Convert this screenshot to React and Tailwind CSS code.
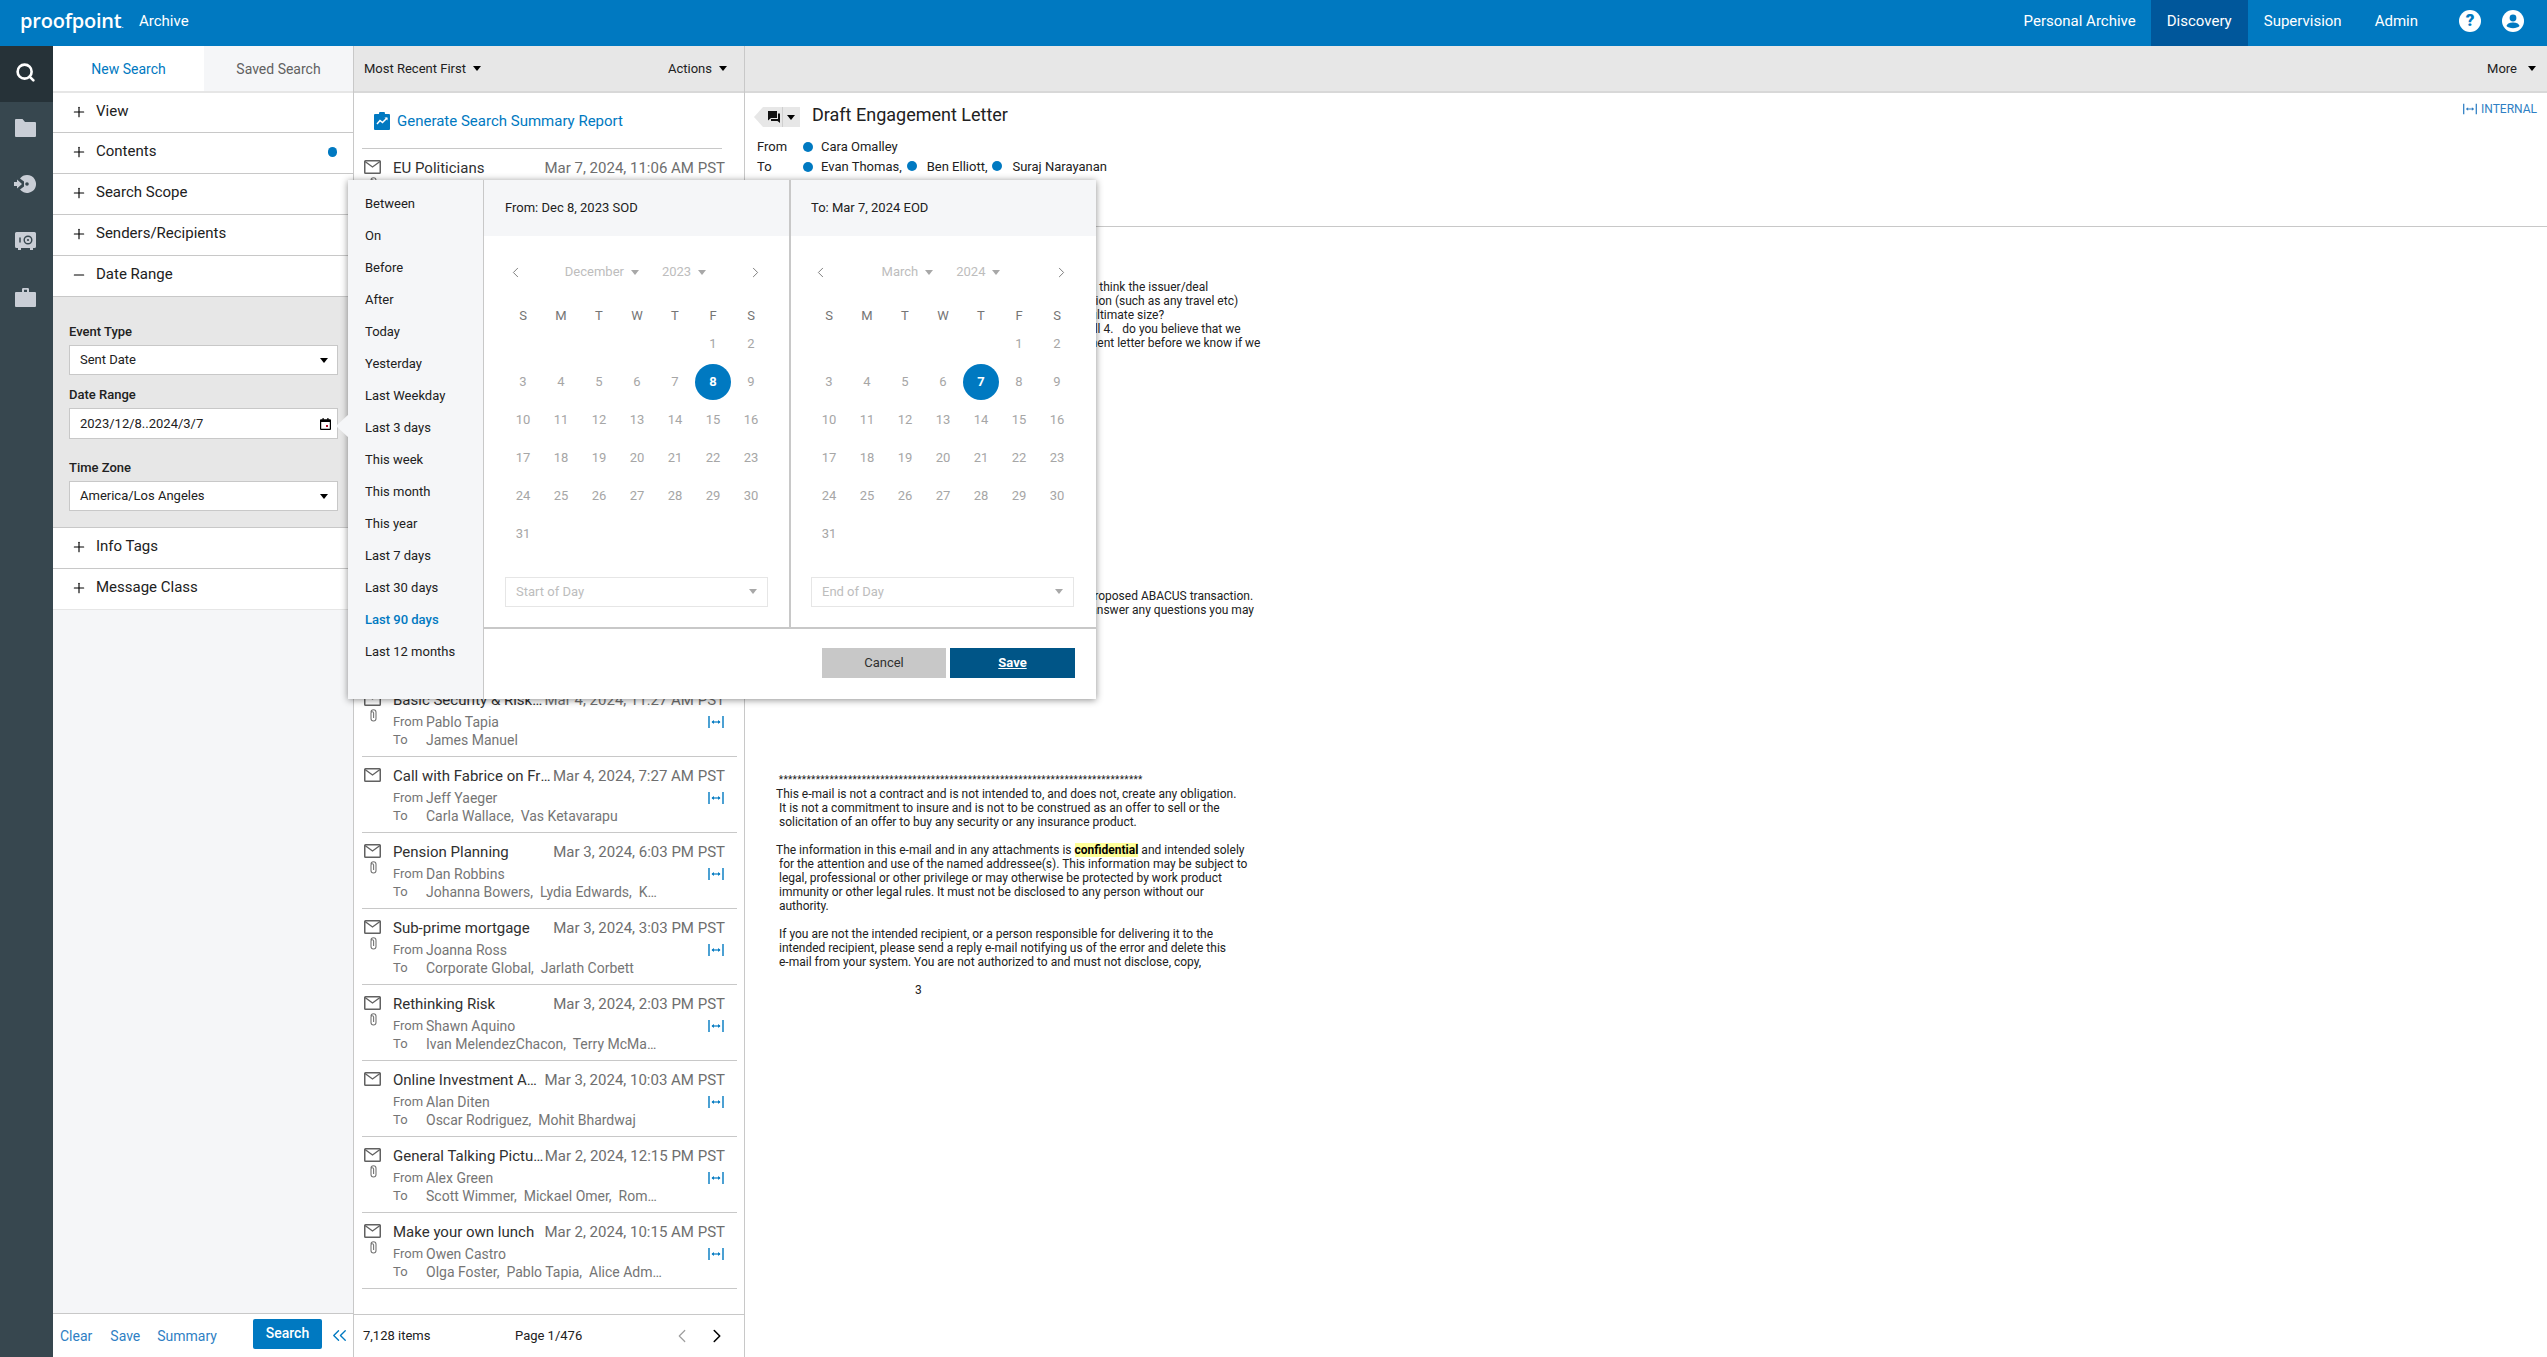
import React from "react";
import { Search, Plus, Minus, ChevronLeft, ChevronRight, ChevronsLeft } from "lucide-react";

const Caret = ({ className = "" }) => (
  <svg width="8" height="5" viewBox="0 0 8 5" className={"shrink-0 " + className}>
    <path d="M0 0h8L4 5z" fill="currentColor" />
  </svg>
);

const Internal = ({ className = "" }) => (
  <svg width="16" height="12" viewBox="0 0 16 12" className={className}>
    <path d="M1 0v12M15 0v12" stroke="currentColor" strokeWidth="1.4" />
    <path d="M4.2 6h7.6" stroke="currentColor" strokeWidth="1.2" />
    <path d="M3.5 6l2.4-2v4zM12.5 6l-2.4-2v4z" fill="currentColor" />
  </svg>
);

const Mail = () => (
  <svg width="17" height="14" viewBox="0 0 17 14" className="text-[#616161]">
    <rect x="0.75" y="0.75" width="15.5" height="12.5" rx="0.8" fill="none" stroke="currentColor" strokeWidth="1.5" />
    <path d="M1 1.5l7.5 5.5L16 1.5" fill="none" stroke="currentColor" strokeWidth="1.4" />
  </svg>
);

const Clip = () => (
  <svg width="7" height="13" viewBox="0 0 7 13" className="text-[#757575]">
    <path d="M1 3.2a2.5 2.5 0 015 0v6.3a2.5 2.5 0 01-5 0V4a1.3 1.3 0 012.6 0v5" fill="none" stroke="currentColor" strokeWidth="1.1" />
  </svg>
);

const Dot = () => <span className="inline-block w-[10px] h-[10px] rounded-full bg-[#0079c1] shrink-0" />;

const railColor = "#c9ced6";
const FolderIcon = () => (
  <svg width="21" height="18" viewBox="0 0 21 18"><path d="M1 0h6.5l2.5 3h10a1 1 0 011 1v13a1 1 0 01-1 1H1a1 1 0 01-1-1V1a1 1 0 011-1z" fill={railColor} /></svg>
);
const SwitchIcon = () => (
  <svg width="22" height="18" viewBox="0 0 22 18">
    <path d="M13 0a9 9 0 11-7 14.6L10 11.5 10 6.5 6 3.4A9 9 0 0113 0z" fill={railColor} />
    <circle cx="13" cy="9" r="1.8" fill="#37474f" />
    <path d="M0 7h3V4.5L8 9l-5 4.5V11H0z" fill={railColor} />
  </svg>
);
const SafeIcon = () => (
  <svg width="21" height="18" viewBox="0 0 21 18">
    <path d="M1.5 0h18A1.5 1.5 0 0121 1.5v13a1.5 1.5 0 01-1.5 1.5H18v2h-3v-2H6v2H3v-2H1.5A1.5 1.5 0 010 14.500v-13A1.500 1.500 0 011.500 0z" fill={railColor} />
    <circle cx="13" cy="8" r="3.8" fill="none" stroke="#37474f" strokeWidth="1.400" />
    <circle cx="13" cy="8" r="1.100" fill="#37474f" />
    <path d="M5 5.500v5" stroke="#37474f" strokeWidth="1.500" />
  </svg>
);
const CaseIcon = () => (
  <svg width="21" height="19" viewBox="0 0 21 19">
    <path d="M7 4V1.200A1.200 1.200 0 018.200 0h4.600A1.200 1.200 0 0114 1.200V4h6a1 1 0 011 1v13a1 1 0 01-1 1H1a1 1 0 01-1-1V5a1 1 0 011-1zm2-2.200V4h3V1.800z" fill={railColor} fillRule="evenodd" />
  </svg>
);

function Header() {
  return (
    <header className="h-[46px] shrink-0 bg-[#0079c1] text-white flex items-center text-[15px]">
      <span className="ml-[20px] text-[20px] font-semibold tracking-[-0.2px] font-['Open_Sans',sans-serif] leading-none pb-[4px] w-[99px]">proofpoint<span className="text-[8px] font-normal">.</span></span>
      <span className="ml-[20px] pb-[3px]">Archive</span>
      <nav className="ml-auto flex items-center h-full text-[15px]">
        <a className="mr-[15px] pb-[3px]">Personal Archive</a>
        <a className="h-full w-[97px] bg-[#00579b] flex items-center justify-center pb-[3px]">Discovery</a>
        <a className="ml-[16px] pb-[3px]">Supervision</a>
        <a className="ml-[33px] pb-[3px]">Admin</a>
        <span className="ml-[41px] mb-[5px] w-[22px] h-[22px] rounded-full bg-white text-[#0079c1] font-black text-[17px] flex items-center justify-center">?</span>
        <svg width="22" height="22" viewBox="0 0 22 22" className="ml-[21px] mr-[23px] mb-[5px]">
          <circle cx="11" cy="11" r="11" fill="#fff" />
          <circle cx="11" cy="8" r="3.400" fill="#0079c1" />
          <path d="M4.500 16c1-2.800 4-3.400 6.500-3.400s5.500.6 6.500 3.400c-1.400 1.400-3.700 2.200-6.500 2.200s-5.100-.8-6.500-2.200z" fill="#0079c1" />
        </svg>
      </nav>
    </header>
  );
}

function Rail() {
  return (
    <aside className="w-[53px] shrink-0 bg-[#37474f] flex flex-col items-center">
      <div className="w-full h-[56px] bg-[#263238] flex items-center justify-center pr-[3px] pb-[3px]">
        <Search size={21} strokeWidth={3} className="text-white" />
      </div>
      <div className="mt-[17px] -ml-[3px]"><FolderIcon /></div>
      <div className="mt-[38px] -ml-[3px]"><SwitchIcon /></div>
      <div className="mt-[39px] -ml-[3px]"><SafeIcon /></div>
      <div className="mt-[38px] -ml-[3px]"><CaseIcon /></div>
    </aside>
  );
}

const Accordion = ({ label, open, dot, last, first }) => (
  <div className={"bg-white flex items-center pl-[18px] pr-[16px] pb-[2px] text-[15px] text-[#212121] border-b shrink-0 " + (first ? "h-[40px] " : "h-[41px] ") + (last ? "border-[#e6e6e6]" : "border-[#c8c8c8]")}>
    {open ? <Minus size={16} strokeWidth={1.700} className="text-black" /> : <Plus size={16} strokeWidth={1.700} className="text-black" />}
    <span className="ml-[9px] pb-[1px]">{label}</span>
    {dot && <span className="ml-auto mr-[0px] w-[9px] h-[10px] rounded-full bg-[#0079c1]" />}
  </div>
);

const Field = ({ label, value, calendar, mt }) => (
  <div className={mt}>
    <div className="text-[13px] font-medium text-[#212121] leading-[16px] mb-[5px]">{label}</div>
    <div className={"w-[269px] bg-white border border-[#c8c8c8] flex items-center pl-[10px] text-[13px] text-[#212121] " + (calendar ? "h-[31px] pr-[6px]" : "h-[30px] pr-[9px]")}>
      <span>{value}</span>
      {calendar ? (
        <svg width="11" height="12" viewBox="0 0 11 12" className="ml-auto text-black">
          <path d="M2.500 0h1.200v1.200h3.600V0h1.200v1.200H10a1 1 0 011 1V11a1 1 0 01-1 1H1a1 1 0 01-1-1V2.200a1 1 0 011-1h1.500zM1.200 4v6.800h8.600V4z" fill="currentColor" fillRule="evenodd" />
          <rect x="6" y="7" width="2" height="2" fill="#b0102a" />
        </svg>
      ) : <Caret className="ml-auto text-black" />}
    </div>
  </div>
);

function LeftPanel() {
  return (
    <section className="w-[301px] shrink-0 bg-[#f5f6f8] border-r border-[#c8c8c8] flex flex-col">
      <div className="h-[47px] flex text-[14px] shrink-0 border-b-2 border-[#e6e6e6]">
        <div className="w-[151px] bg-white text-[#0079c1] flex items-center justify-center pt-[1px]">New Search</div>
        <div className="flex-1 text-[#616161] flex items-center justify-center pt-[1px]">Saved Search</div>
      </div>
      <Accordion label="View" first />
      <Accordion label="Contents" dot />
      <Accordion label="Search Scope" />
      <Accordion label="Senders/Recipients" />
      <Accordion label="Date Range" open />
      <div className="h-[231px] shrink-0 bg-[#e7e7e7] border-b border-[#c8c8c8] pl-[16px] pt-[27px]">
        <Field label="Event Type" value="Sent Date" />
        <Field label="Date Range" value="2023/12/8..2024/3/7" calendar mt="mt-[12px]" />
        <Field label="Time Zone" value="America/Los Angeles" mt="mt-[21px]" />
      </div>
      <Accordion label="Info Tags" />
      <Accordion label="Message Class" last />
      <div className="mt-auto h-[44px] bg-white border-t border-[#c8c8c8] flex items-center text-[14px] text-[#2f7fc4] pl-[7px]">
        <a className="pt-[2px]">Clear</a>
        <a className="ml-[18px] pt-[2px]">Save</a>
        <a className="ml-[17px] pt-[2px]">Summary</a>
        <button className="ml-[36px] mb-[3px] w-[69px] h-[30px] rounded-[2px] bg-[#0079c1] text-white font-medium text-[14px] flex items-center justify-center pb-[2px]">Search</button>
        <ChevronsLeft size={23} strokeWidth={1.400} className="ml-[6px] text-[#0079c1]" />
      </div>
    </section>
  );
}

const hiddenItems = [
  ["EU Politicians", "Mar 7, 2024, 11:06 AM PST", "Cara Omalley", "Oscar Rodriguez, Mohit Bhardwaj", true],
  ["Draft Engagement Letter", "Mar 7, 2024, 9:42 AM PST", "Cara Omalley", "Evan Thomas, Ben Elliott, Suraj Narayanan", true],
  ["Quarterly Review", "Mar 6, 2024, 4:12 PM PST", "Jeff Yaeger", "Carla Wallace", false],
  ["Client Onboarding", "Mar 6, 2024, 1:30 PM PST", "Alex Green", "Scott Wimmer", true],
  ["Market Update", "Mar 6, 2024, 8:05 AM PST", "Joanna Ross", "Corporate Global", false],
  ["Compliance Training", "Mar 5, 2024, 3:21 PM PST", "Dan Robbins", "Lydia Edwards", true],
  ["Budget Notes", "Mar 5, 2024, 10:48 AM PST", "Shawn Aquino", "Terry McMahon", false],
];
const items = [
  ...hiddenItems,
  ["Basic Security & Risk Overview", "Mar 4, 2024, 11:27 AM PST", "Pablo Tapia", "James Manuel", true],
  ["Call with Fabrice on Friday morning", "Mar 4, 2024, 7:27 AM PST", "Jeff Yaeger", "Carla Wallace,  Vas Ketavarapu", false],
  ["Pension Planning", "Mar 3, 2024, 6:03 PM PST", "Dan Robbins", "Johanna Bowers,  Lydia Edwards,  K…", true],
  ["Sub-prime mortgage", "Mar 3, 2024, 3:03 PM PST", "Joanna Ross", "Corporate Global,  Jarlath Corbett", true],
  ["Rethinking Risk", "Mar 3, 2024, 2:03 PM PST", "Shawn Aquino", "Ivan MelendezChacon,  Terry McMa…", true],
  ["Online Investment Advice", "Mar 3, 2024, 10:03 AM PST", "Alan Diten", "Oscar Rodriguez,  Mohit Bhardwaj", false],
  ["General Talking Pictures", "Mar 2, 2024, 12:15 PM PST", "Alex Green", "Scott Wimmer,  Mickael Omer,  Rom…", true],
  ["Make your own lunch", "Mar 2, 2024, 10:15 AM PST", "Owen Castro", "Olga Foster,  Pablo Tapia,  Alice Adm…", true],
];

const Item = ({ d }) => (
  <div className="h-[76px] border-b border-[#c8c8c8] flex shrink-0">
    <div className="w-[30px] shrink-0 pl-[2px] pt-[11px] flex flex-col items-start">
      <Mail />
      {d[4] && <div className="ml-[6px] mt-[3px]"><Clip /></div>}
    </div>
    <div className="flex-1 min-w-0 pr-[12px] pl-[1px]">
      <div className="flex items-center text-[15px] leading-[20px] mt-[9px]">
        <span className="truncate text-[#303030] min-w-0 flex-1">{d[0]}</span>
        <span className="shrink-0 text-[#6e6e6e]">{d[1]}</span>
      </div>
      <div className="flex items-center text-[14px] leading-[18px] text-[#757575] mt-[3px]">
        <span className="w-[33px] shrink-0 text-[13px]">From</span><span className="whitespace-pre">{d[2]}</span>
        <Internal className="ml-auto text-[#0079c1] mr-[1px]" />
      </div>
      <div className="flex text-[14px] leading-[18px] text-[#757575]">
        <span className="w-[33px] shrink-0 text-[13px]">To</span>
        <span className="whitespace-pre">{d[3]}</span>
      </div>
    </div>
  </div>
);

function ListPanel() {
  return (
    <section className="w-[391px] shrink-0 bg-white border-r border-[#c8c8c8] flex flex-col overflow-hidden">
      <div className="h-[47px] bg-[#e7e7e7] border-b-2 border-[#d8d8d8] shrink-0 flex items-center pl-[10px] pr-[17px] text-[13px] text-[#212121]">
        <span>Most Recent First</span><Caret className="ml-[7px] text-black" />
        <span className="ml-auto">Actions</span><Caret className="ml-[7px] text-black" />
      </div>
      <div className="h-[56px] shrink-0 ml-[8px] mr-[22px] border-b border-[#c8c8c8] flex items-center pl-[12px] pt-[2px] text-[15px] text-[#0079c1]">
        <svg width="16" height="18" viewBox="0 0 16 18" className="shrink-0 -mt-[2px]">
          <path d="M1 2h4a3 3 0 016 0h4a1 1 0 011 1v14a1 1 0 01-1 1H1a1 1 0 01-1-1V3a1 1 0 011-1z" fill="#0079c1" />
          <path d="M3 12l3-3.500 2.500 2L13 6" fill="none" stroke="#fff" strokeWidth="1.500" />
          <path d="M10.500 5.500H13.500V8.500z" fill="#fff" />
        </svg>
        <span className="ml-[7px]">Generate Search Summary Report</span>
      </div>
      <div className="flex-1 min-h-0 overflow-hidden ml-[8px] mr-[7px]">
        {items.map((d) => <Item key={d[0]} d={d} />)}
      </div>
      <div className="h-[43px] shrink-0 border-t border-[#c8c8c8] flex items-center pl-[9px] text-[13px] text-[#212121]">
        <span className="w-[152px]">7,128 items</span>
        <span>Page 1/476</span>
        <ChevronLeft size={22} strokeWidth={1.300} className="ml-[89px] text-[#9e9e9e]" />
        <ChevronRight size={22} strokeWidth={1.700} className="ml-[13px] text-black" />
      </div>
    </section>
  );
}

const bodyTop = [
  "Hi all Before we proceed I would like to understand what you think the issuer/deal",
  " 1. What is timing of the transaction and the related preparation (such as any travel etc)",
  " 2. What is expected structure of the notes, and what is the ultimate size?",
  " 3. Who will be in the underwriting team and who else will sell 4.   do you believe that we",
  " need to be in a position to sign off on terms of the engagement letter before we know if we",
];
const bodyMid = [
  "", " should proceed.", "", " Thanks,", " Cara", "", "", " Cara Omalley", " Associate, Structured Finance", "", "", "", "", "", "", "", "",
];
const bodyEnd = [
  " Attached for review is a draft of engagement letter for the proposed ABACUS transaction.",
  " Please review it and let me know whether you have, or can answer any questions you may",
];
const Line = ({ children }) => <div className="h-[14px] leading-[14px] whitespace-pre">{children || " "}</div>;

function ReadPanel() {
  return (
    <section className="flex-1 min-w-0 bg-white flex flex-col">
      <div className="h-[47px] bg-[#e7e7e7] border-b-2 border-[#d8d8d8] shrink-0 flex items-center justify-end pr-[11px] text-[13px] text-[#212121]">
        <span>More</span><Caret className="ml-[11px] text-black" />
      </div>
      <div className="relative h-[134px] shrink-0 border-b border-[#c8c8c8] text-[#212121]">
        <div className="absolute right-[10px] top-[7px] flex items-center text-[12px] text-[#2f7fc4]">
          <Internal className="mr-[3px] scale-90" />INTERNAL
        </div>
        <div className="flex items-start mt-[14px] ml-[9px]">
          <div className="relative w-[46px] h-[20px] bg-[#e7e7e7] flex items-center pl-[14px] [clip-path:polygon(9px_0,100%_0,100%_100%,9px_100%,0_50%)]">
            <svg width="12" height="12" viewBox="0 0 12 12"><path d="M0 0h9v7H3L0 9.500zM10 2.500h2V12l-2.500-2H3V8h7z" fill="#111" /></svg>
            <span className="w-px h-[20px] bg-[#cfcfcf] ml-[2px]" />
            <Caret className="ml-[4px] text-black" />
          </div>
          <h1 className="ml-[12px] -mt-[2px] text-[18px] leading-[20px] font-normal">Draft Engagement Letter</h1>
        </div>
        <div className="ml-[12px] mt-[10px] text-[13px] leading-[20px]">
          <div className="flex items-center">
            <span className="w-[46px]">From</span><Dot /><span className="ml-[8px]">Cara Omalley</span>
          </div>
          <div className="flex items-center">
            <span className="w-[46px]">To</span><Dot /><span className="ml-[8px]">Evan Thomas,</span>
            <span className="ml-[5px]"><Dot /></span><span className="ml-[10px]">Ben Elliott,</span>
            <span className="ml-[5px]"><Dot /></span><span className="ml-[10px]">Suraj Narayanan</span>
          </div>
        </div>
      </div>
      <div className="pl-[31px] pt-[53px] text-[12px] text-[#212121] font-['Roboto',sans-serif]">
        {bodyTop.map((l, i) => <Line key={i}>{l}</Line>)}
        {bodyMid.map((l, i) => <Line key={i}>{l}</Line>)}
        <div className="h-[1px]" />
        {bodyEnd.map((l, i) => <Line key={i}>{l}</Line>)}
        <div className="h-[156px]" />
        <div className="h-[14px] leading-[14px] whitespace-pre text-[10px] tracking-[0.3px]">{" " + "*".repeat(79)}</div>
        <div>
          <Line>This e-mail is not a contract and is not intended to, and does not, create any obligation.</Line>
          <Line> It is not a commitment to insure and is not to be construed as an offer to sell or the</Line>
          <Line> solicitation of an offer to buy any security or any insurance product.</Line>
          <Line />
          <Line>The information in this e-mail and in any attachments is <span className="bg-[#ffff99] font-bold text-black">confidential</span> and intended solely</Line>
          <Line> for the attention and use of the named addressee(s). This information may be subject to</Line>
          <Line> legal, professional or other privilege or may otherwise be protected by work product</Line>
          <Line> immunity or other legal rules. It must not be disclosed to any person without our</Line>
          <Line> authority.</Line>
          <Line />
          <Line> If you are not the intended recipient, or a person responsible for delivering it to the</Line>
          <Line> intended recipient, please send a reply e-mail notifying us of the error and delete this</Line>
          <Line> e-mail from your system. You are not authorized to and must not disclose, copy,</Line>
          <Line />
          <div className="h-[14px] leading-[14px] pl-[139px]">3</div>
        </div>
      </div>
    </section>
  );
}

const presets = ["Between","On","Before","After","Today","Yesterday","Last Weekday","Last 3 days","This week","This month","This year","Last 7 days","Last 30 days","Last 90 days","Last 12 months"];
const weekdays = ["S","M","T","W","T","F","S"];

function Calendar({ title, month, year, blanks, selected, time, first }) {
  const days = Array.from({ length: 31 }, (_, i) => i + 1);
  return (
    <div className={"shrink-0 flex flex-col " + (first ? "w-[307px] border-r-2 border-[#c8c8c8]" : "w-[305px]")}>
      <div className={"h-[56px] bg-[#f5f6f8] flex items-center text-[13px] text-[#212121] shrink-0 " + (first ? "pl-[21px]" : "pl-[20px]")}>{title}</div>
      <div className={"mt-[18px] h-[36px] flex items-center text-[13px] text-[#bdbdbd] " + (first ? "pl-[24px] pr-[26px]" : "pl-[22px] pr-[27px]")}>
        <ChevronLeft size={17} strokeWidth={1.300} className="text-[#757575] -ml-[1px]" />
        <div className="flex-1 flex items-center justify-center gap-[23px]">
          <span className="flex items-center gap-[7px]">{month}<Caret className="text-[#a8a8a8]" /></span>
          <span className="flex items-center gap-[7px]">{year}<Caret className="text-[#a8a8a8]" /></span>
        </div>
        <ChevronRight size={17} strokeWidth={1.300} className="text-[#757575] -mr-[1px]" />
      </div>
      <div className={"mt-[16px] grid grid-cols-[repeat(7,38px)] text-center text-[13px] text-[#757575] h-[19px] leading-[19px] " + (first ? "pl-[20px]" : "pl-[19px]")}>
        {weekdays.map((w, i) => <span key={i}>{w}</span>)}
      </div>
      <div className={"grid grid-cols-[repeat(7,38px)] auto-rows-[38px] text-[13px] text-[#a6a6a6] " + (first ? "pl-[20px]" : "pl-[19px]")}>
        {Array.from({ length: blanks }).map((_, i) => <span key={"b" + i} />)}
        {days.map((n) => (
          <span key={n} className="flex items-center justify-center">
            {n === selected
              ? <span className="w-[36px] h-[36px] rounded-full bg-[#0079c1] text-white font-bold flex items-center justify-center">{n}</span>
              : n}
          </span>
        ))}
      </div>
      <div className={"mt-[24px] w-[263px] h-[30px] border border-[#e6e6e6] flex items-center pl-[10px] pr-[10px] pb-[1px] text-[13px] text-[#bdbdbd] " + (first ? "ml-[21px]" : "ml-[20px]")}>
        {time}<Caret className="ml-auto text-[#a8a8a8]" />
      </div>
      <div className="h-[20px]" />
    </div>
  );
}

function Popover() {
  return (
    <div className="absolute left-[348px] top-[180px] w-[748px] h-[519px] bg-white shadow-[0_1px_7px_rgba(0,0,0,0.45)] flex text-[13px] font-['Roboto',sans-serif]">
      <div className="absolute -left-[12px] top-[234px] w-[13px] h-[24px] bg-[#f5f6f8] [clip-path:polygon(0_50%,100%_0,100%_100%)]" />
      <div className="w-[136px] shrink-0 bg-[#f5f6f8] border-r border-[#c8c8c8] pt-[8px] pl-[17px]">
        {presets.map((p) => (
          <div key={p} className={"h-[32px] flex items-center " + (p === "Last 90 days" ? "text-[#0079c1] font-medium" : "text-[#212121]")}>{p}</div>
        ))}
      </div>
      <div className="flex-1 flex flex-col min-w-0">
        <div className="flex border-b-2 border-[#c8c8c8] h-[449px] shrink-0">
          <Calendar title="From: Dec 8, 2023 SOD" month="December" year="2023" blanks={5} selected={8} time="Start of Day" first />
          <Calendar title="To: Mar 7, 2024 EOD" month="March" year="2024" blanks={5} selected={7} time="End of Day" />
        </div>
        <div className="flex-1 flex justify-end items-center pr-[21px] gap-[4px] pb-[2px]">
          <button className="w-[124px] h-[30px] bg-[#c8c8c8] text-[#303030] text-[13px]">Cancel</button>
          <button className="w-[125px] h-[30px] bg-[#005587] text-white font-bold underline text-[13px]">Save</button>
        </div>
      </div>
    </div>
  );
}

export default function App() {
  return (
    <div className="relative w-[2547px] h-[1357px] overflow-hidden flex flex-col bg-white font-['Roboto',sans-serif]">
      <Header />
      <main className="flex-1 min-h-0 flex">
        <Rail />
        <LeftPanel />
        <ListPanel />
        <ReadPanel />
      </main>
      <Popover />
    </div>
  );
}
